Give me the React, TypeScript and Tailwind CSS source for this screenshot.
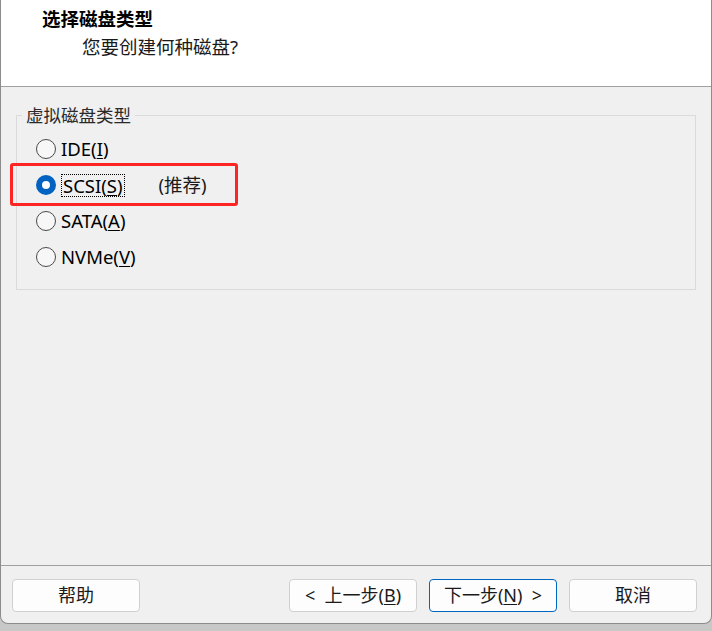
import React from "react";

const font = { fontFamily: '"Noto Sans", "Noto Sans CJK SC", sans-serif' };

function Radio({ checked }: { checked?: boolean }) {
  if (checked) {
    return (
      <span className="w-[20px] h-[20px] rounded-full bg-[#0062c1] flex items-center justify-center shrink-0">
        <span className="w-[8px] h-[8px] rounded-full bg-white" />
      </span>
    );
  }
  return <span className="w-[20px] h-[20px] rounded-full border-[1.5px] border-[#4a4a4a] bg-[#f7f7f7] shrink-0" />;
}

function Row({ children, checked }: { children: React.ReactNode; checked?: boolean }) {
  return (
    <div className="h-[36px] flex items-center pl-[19px]">
      <Radio checked={checked} />
      <div className="ml-[5px] flex items-center">{children}</div>
    </div>
  );
}

function Btn({ children, primary }: { children: React.ReactNode; primary?: boolean }) {
  return (
    <button
      className={
        "w-[128px] h-[33px] rounded-[4px] bg-[#fdfdfd] text-[18px] text-[#1a1a1a] flex items-center justify-center border " +
        (primary ? "border-[#0067c0]" : "border-[#d0d0d0]")
      }
      style={font}
    >
      {children}
    </button>
  );
}

export default function App() {
  return (
    <div className="w-[712px] h-[631px] bg-[#c8c8c8] overflow-hidden" style={font}>
      <div className="w-[712px] h-[624px] bg-[#f0f0f0] border-l border-r border-b border-[#8c8c8c] rounded-b-[8px] flex flex-col">
        <div className="h-[87px] bg-white border-b border-[#a0a0a0] shrink-0 pl-[41px] pt-[6px]">
          <div className="text-[18.5px] font-bold text-black leading-[26px]">选择磁盘类型</div>
          <div className="text-[18.5px] text-[#1a1a1a] leading-[26px] pl-[40px] mt-[2px]">您要创建何种磁盘?</div>
        </div>

        <div className="relative">
          <fieldset className="mx-[15px] mt-[16px] h-[187px] border border-[#dadada] pl-0">
            <legend className="ml-[5px] px-[4px] text-[17.5px] text-[#2a2a2a] leading-[24px]">虚拟磁盘类型</legend>
            <div className="pt-[4px]">
              <Row>
                <span className="text-[18.5px] text-black">
                  IDE(<u className="underline-offset-2 decoration-1">I</u>)
                </span>
              </Row>
              <Row checked>
                <span className="text-[18.5px] text-black border border-dotted border-black px-[1px] leading-[21px]">
                  SCSI(<u className="underline-offset-2 decoration-1">S</u>)
                </span>
                <span className="text-[18.5px] text-[#1a1a1a] ml-[34px]">(推荐)</span>
              </Row>
              <Row>
                <span className="text-[18.5px] text-black">
                  SATA(<u className="underline-offset-2 decoration-1">A</u>)
                </span>
              </Row>
              <Row>
                <span className="text-[18.5px] text-black">
                  NVMe(<u className="underline-offset-2 decoration-1">V</u>)
                </span>
              </Row>
            </div>
          </fieldset>
          <div className="absolute left-[9px] top-[76px] w-[228px] h-[43px] border-[3px] border-[#ff2424] rounded-[3px]" />
        </div>

        <div className="flex-1" />
        <div className="border-t border-[#a0a0a0]" />
        <div className="flex items-center pl-[11px] pr-[14px] pt-[13px] pb-[11px]">
          <Btn>帮助</Btn>
          <div className="flex-1" />
          <Btn>&lt;&nbsp; 上一步(<u className="underline-offset-2 decoration-1">B</u>)</Btn>
          <div className="w-[12px]" />
          <Btn primary>
            下一步(<u className="underline-offset-2 decoration-1">N</u>)&nbsp; &gt;
          </Btn>
          <div className="w-[12px]" />
          <Btn>取消</Btn>
        </div>
      </div>
    </div>
  );
}
